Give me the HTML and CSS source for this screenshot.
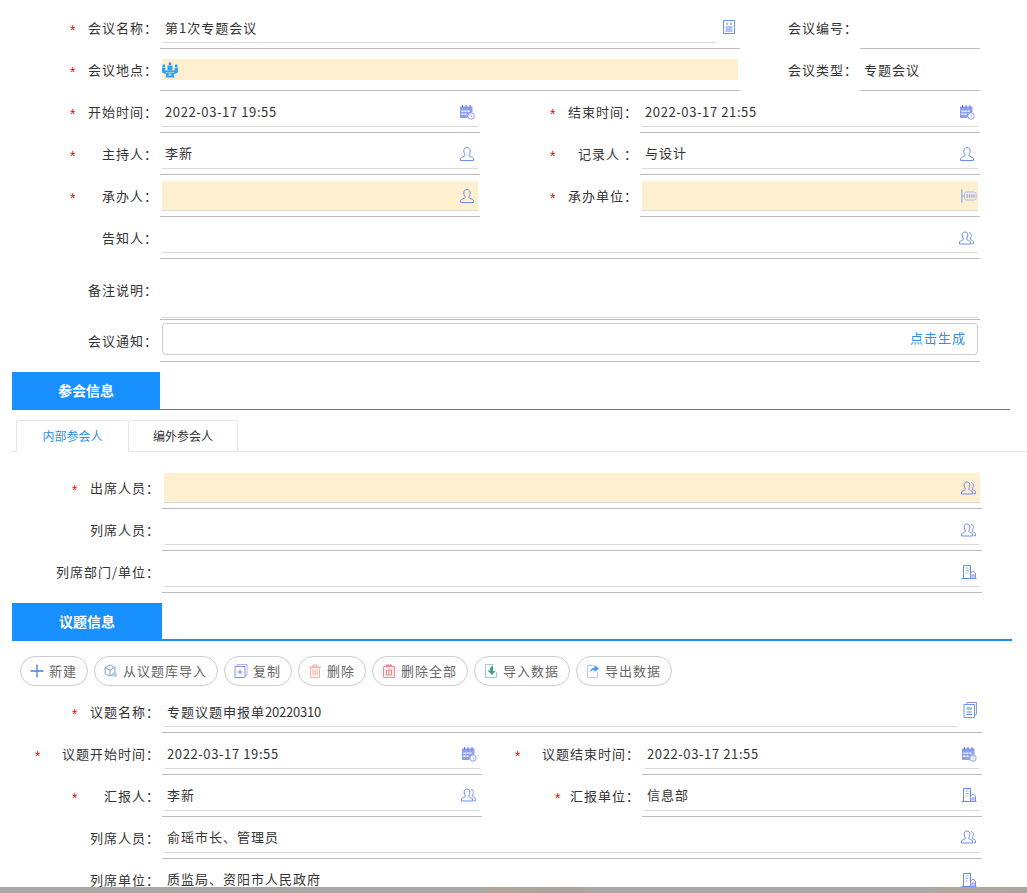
FILE: index.html
```html
<!DOCTYPE html>
<html lang="zh-CN">
<head>
    <meta charset="UTF-8">
    <title>会议信息</title>
    <link rel="stylesheet" href="styles.css">
</head>
<body>
    <svg class="defs" width="0" height="0">
        <symbol id="i-doc" viewBox="0 0 16 16">
            <path d="M2.500 1.500h11v13h-11z" fill="none" stroke="#6b94ee"/>
            <path d="M5 3.500h2V6H5zM9 3.500h2V6H9z" fill="#a9bdf2"/>
            <path d="M4.500 8h7M4.500 10h7M4.500 12h7" stroke="#5f88ea" fill="none"/>
        </symbol>
        <symbol id="i-doc2" viewBox="0 0 16 16">
            <path d="M5 2.500V.5h9.500v12H12.500" fill="none" stroke="#7d9cf0"/>
            <path d="M2 2.500h10.500v13H2z" fill="#fff" stroke="#6b94ee"/>
            <path d="M4.500 5h5.500v3H4.500z" fill="#a9bdf2"/>
            <path d="M4.500 10h5.500M4.500 12.500h5.500" stroke="#5f88ea" fill="none"/>
        </symbol>
        <symbol id="i-cal" viewBox="0 0 16 16">
            <path d="M1 2.500h12.500V8L8 14H1z" fill="#8f9ff0"/>
            <path d="M3.500 1v3M7 1v3M11 1v3" stroke="#5d74e0" fill="none"/>
            <path d="M2.500 6.500h2V8h-2zM5.500 6.500h2V8h-2zM8.500 6.500h2V8h-2zM2.500 9.500h2V11h-2zM5.500 9.500h2V11h-2z" fill="#fff"/>
            <circle cx="12" cy="12" r="3.200" fill="#fff" stroke="#8d9cf0"/>
            <path d="M12 10.500V12l1.200 1" stroke="#8d9cf0" fill="none" stroke-width=".8"/>
        </symbol>
        <symbol id="i-user" viewBox="0 0 16 16">
            <path d="M8 1.500c2 0 3.200 1.500 3.200 3.500S10 8.500 9.800 9.500c0 .8 4.200 1.500 4.700 3v2h-13v-2c.5-1.500 4.700-2.200 4.700-3C6 8.500 4.800 7 4.800 5S6 1.500 8 1.500z" fill="none" stroke="#6a8cf0"/>
        </symbol>
        <symbol id="i-users" viewBox="0 0 16 16">
            <path d="M6 2c1.800 0 2.900 1.300 2.900 3.100S7.800 8.300 7.600 9.300c0 .7 3.500 1.300 4 2.700v2H.5v-2c.5-1.400 4-2 4-2.700C4.200 8.300 3.100 6.900 3.100 5.100S4.200 2 6 2z" fill="none" stroke="#6a8cf0"/>
            <path d="M10 2.500c1.500.2 2.400 1.300 2.400 2.800s-1 2.800-1.200 3.800c0 .6 3 1.300 3.300 2.700v2h-2" fill="none" stroke="#7f90ee"/>
        </symbol>
        <symbol id="i-build" viewBox="0 0 16 16">
            <path d="M2.500 14.500V1.500h7v13M.5 14.500h15" fill="none" stroke="#5f8bef"/>
            <path d="M4.500 4h3M4.500 6.500h3M4.500 9h2" stroke="#97a8f0" stroke-width="1.200" fill="none"/>
            <path d="M9.500 9L12 7l2.500 2v5.500h-5zM11 11h2v3.500h-2z" fill="none" stroke="#7f90ee"/>
        </symbol>
        <symbol id="i-org" viewBox="0 0 18 18">
            <path d="M1 1v16" stroke="#6f96ee" fill="none"/>
            <path d="M1 9h3" stroke="#8f9ff0" fill="none"/>
            <rect x="4" y="4.500" width="13" height="9" rx="2" fill="none" stroke="#a3b0ee"/>
            <path d="M7 7v4M9.500 7v4M12 7v4M14.500 7v4" stroke="#8f9ff0" stroke-width="1.300" fill="none"/>
        </symbol>
        <symbol id="i-meet" viewBox="0 0 16 16">
            <g fill="#2ea3f2">
                <path d="M.5 2.500h2.500V5H.5zM13 2.500h2.500V5H13zM6.700.5h2.600V3H6.700zM5.500 3.500h5v5h-5z"/>
                <path d="M0 5.500h3.300V10L5.500 11.500V13L0 10.500zM16 5.500h-3.300V10L10.500 11.500V13L16 10.500z"/>
                <path d="M3 8.500h10V10H3z"/>
                <path d="M4.500 10.500h7l1 5h-9z"/>
            </g>
            <path d="M6.500 11.500h3v2.500h-3z" fill="#8fd0f8"/>
        </symbol>
        <symbol id="i-plus" viewBox="0 0 14 14">
            <path d="M7 .5v13M.5 7h13" stroke="#3f83e6" stroke-width="1.300" fill="none"/>
        </symbol>
        <symbol id="i-cube" viewBox="0 0 14 14">
            <path d="M6 1L1 3.500v6L6 12l5-2.500v-6zM1 3.500L6 6l5-2.500M6 6v6" fill="none" stroke="#7ea6c8"/>
            <circle cx="10.500" cy="10.500" r="2.500" fill="#b5cfe2"/>
        </symbol>
        <symbol id="i-copy" viewBox="0 0 14 14">
            <path d="M3 2.500V.5h10v11h-2" fill="none" stroke="#b3b6ee"/>
            <path d="M1 2.500h10v11H1z" fill="#fff" stroke="#8190e6"/>
            <path d="M6 5.500v5M3.500 8h5" stroke="#6f8cd8" fill="none"/>
        </symbol>
        <symbol id="i-trash" viewBox="0 0 14 14">
            <path d="M1 3h12M5 3V1h4v2" fill="none" stroke="#f3a49a"/>
            <path d="M2.500 3.500h9v10h-9z" fill="#fff3ee" stroke="#f1b8a8"/>
            <path d="M5 5.500v6M7 5.500v6M9 5.500v6" stroke="#eeb1c0" fill="none"/>
        </symbol>
        <symbol id="i-trash2" viewBox="0 0 14 14">
            <path d="M1.500 2.500h11v11h-11z" fill="#fdeaf0" stroke="#f2869c" stroke-linejoin="round"/>
            <path d="M4 .5h6v2H4z" fill="#f2869c"/>
            <path d="M4.500 6h5v5h-5zM7 6v5" fill="none" stroke="#d9947c"/>
        </symbol>
        <symbol id="i-in" viewBox="0 0 14 14">
            <path d="M1.500 .5h8M1.500 .5v13h11V8" fill="none" stroke="#a5c8d8"/>
            <path d="M9 1L6 4v2.500H3.500L8 11l3.500-4H9z" fill="#3fa58b"/>
        </symbol>
        <symbol id="i-out" viewBox="0 0 14 14">
            <path d="M7 1.500H1.500v12h10V8" fill="none" stroke="#b9c6f2"/>
            <path d="M8.500 1L13 4.500 8.500 8V6C6 6 4.800 7 4 9c0-3 1.500-5 4.500-5.200z" fill="#3f9ff0"/>
        </symbol>
    </svg>

    <div class="page">
        <div class="row">
            <div class="field f-main">
                <div class="lbl"><span class="star">*</span><span>会议名称：</span></div>
                <div class="val val-split">
                    <div class="box">第1次专题会议</div>
                    <svg class="ico ico-out"><use href="#i-doc"/></svg>
                </div>
            </div>
            <div class="field f-side">
                <div class="lbl lbl-side"><span>会议编号：</span></div>
                <div class="val"></div>
            </div>
        </div>
        <div class="row">
            <div class="field f-main">
                <div class="lbl"><span class="star">*</span><span>会议地点：</span></div>
                <div class="val"><div class="box box-place"><svg class="ico"><use href="#i-meet"/></svg></div></div>
            </div>
            <div class="field f-side">
                <div class="lbl lbl-side"><span>会议类型：</span></div>
                <div class="val"><div class="box box-plain">专题会议</div></div>
            </div>
        </div>
        <div class="row">
            <div class="field">
                <div class="lbl"><span class="star">*</span><span>开始时间：</span></div>
                <div class="val"><div class="box"><span class="num">2022-03-17 19:55</span><svg class="ico"><use href="#i-cal"/></svg></div></div>
            </div>
            <div class="field">
                <div class="lbl"><span class="star">*</span><span>结束时间：</span></div>
                <div class="val"><div class="box"><span class="num">2022-03-17 21:55</span><svg class="ico"><use href="#i-cal"/></svg></div></div>
            </div>
        </div>
        <div class="row">
            <div class="field">
                <div class="lbl"><span class="star">*</span><span>主持人：</span></div>
                <div class="val"><div class="box box-up">李新<svg class="ico"><use href="#i-user"/></svg></div></div>
            </div>
            <div class="field">
                <div class="lbl"><span class="star">*</span><span>记录人 ：</span></div>
                <div class="val"><div class="box box-up">与设计<svg class="ico"><use href="#i-user"/></svg></div></div>
            </div>
        </div>
        <div class="row">
            <div class="field">
                <div class="lbl"><span class="star">*</span><span>承办人：</span></div>
                <div class="val"><div class="box req"><span></span><svg class="ico"><use href="#i-user"/></svg></div></div>
            </div>
            <div class="field">
                <div class="lbl"><span class="star">*</span><span>承办单位：</span></div>
                <div class="val"><div class="box req"><span></span><svg class="ico ico-org"><use href="#i-org"/></svg></div></div>
            </div>
        </div>
        <div class="row">
            <div class="field f-full">
                <div class="lbl"><span></span><span>告知人：</span></div>
                <div class="val"><div class="box"><span></span><svg class="ico"><use href="#i-users"/></svg></div></div>
            </div>
        </div>
        <div class="row row-note">
            <div class="field f-full">
                <div class="lbl"><span></span><span>备注说明：</span></div>
                <div class="val"><div class="box box-note"></div></div>
            </div>
        </div>
        <div class="row">
            <div class="field f-full">
                <div class="lbl"><span></span><span>会议通知：</span></div>
                <div class="val"><div class="box box-notice"><span></span><a class="gen">点击生成</a></div></div>
            </div>
        </div>

        <div class="sec-head"><div class="sec-title">参会信息</div></div>
        <div class="tabs">
            <div class="tab tab-on">内部参会人</div>
            <div class="tab">编外参会人</div>
        </div>

        <div class="group">
            <div class="row">
                <div class="field f-full">
                    <div class="lbl"><span class="star">*</span><span>出席人员：</span></div>
                    <div class="val"><div class="box req"><span></span><svg class="ico"><use href="#i-users"/></svg></div></div>
                </div>
            </div>
            <div class="row">
                <div class="field f-full">
                    <div class="lbl"><span></span><span>列席人员：</span></div>
                    <div class="val"><div class="box"><span></span><svg class="ico"><use href="#i-users"/></svg></div></div>
                </div>
            </div>
            <div class="row">
                <div class="field f-full">
                    <div class="lbl lbl-long"><span></span><span>列席部门/单位：</span></div>
                    <div class="val"><div class="box"><span></span><svg class="ico"><use href="#i-build"/></svg></div></div>
                </div>
            </div>
        </div>

        <div class="sec-head sec-head2"><div class="sec-title">议题信息</div></div>
        <div class="toolbar">
            <button class="btn"><svg class="btn-ico"><use href="#i-plus"/></svg>新建</button>
            <button class="btn"><svg class="btn-ico"><use href="#i-cube"/></svg>从议题库导入</button>
            <button class="btn"><svg class="btn-ico"><use href="#i-copy"/></svg>复制</button>
            <button class="btn"><svg class="btn-ico"><use href="#i-trash"/></svg>删除</button>
            <button class="btn"><svg class="btn-ico"><use href="#i-trash2"/></svg>删除全部</button>
            <button class="btn"><svg class="btn-ico"><use href="#i-in"/></svg>导入数据</button>
            <button class="btn"><svg class="btn-ico"><use href="#i-out"/></svg>导出数据</button>
        </div>

        <div class="group">
            <div class="row">
                <div class="field f-full">
                    <div class="lbl"><span class="star">*</span><span>议题名称：</span></div>
                    <div class="val val-split val-split2">
                        <div class="box"><span>专题议题申报单<span class="code">20220310</span></span></div>
                        <svg class="ico ico-out"><use href="#i-doc2"/></svg>
                    </div>
                </div>
            </div>
            <div class="row">
                <div class="field">
                    <div class="lbl lbl-wide"><span class="star">*</span><span>议题开始时间：</span></div>
                    <div class="val"><div class="box"><span class="num">2022-03-17 19:55</span><svg class="ico"><use href="#i-cal"/></svg></div></div>
                </div>
                <div class="field">
                    <div class="lbl lbl-wide"><span class="star">*</span><span>议题结束时间：</span></div>
                    <div class="val"><div class="box"><span class="num">2022-03-17 21:55</span><svg class="ico"><use href="#i-cal"/></svg></div></div>
                </div>
            </div>
            <div class="row">
                <div class="field">
                    <div class="lbl"><span class="star">*</span><span>汇报人：</span></div>
                    <div class="val"><div class="box box-up1">李新<svg class="ico"><use href="#i-users"/></svg></div></div>
                </div>
                <div class="field">
                    <div class="lbl lbl-near"><span class="star">*</span><span>汇报单位：</span></div>
                    <div class="val"><div class="box box-up1">信息部<svg class="ico"><use href="#i-build"/></svg></div></div>
                </div>
            </div>
            <div class="row">
                <div class="field f-full">
                    <div class="lbl"><span></span><span>列席人员：</span></div>
                    <div class="val"><div class="box box-up1">俞瑶市长、管理员<svg class="ico"><use href="#i-users"/></svg></div></div>
                </div>
            </div>
            <div class="row">
                <div class="field f-full">
                    <div class="lbl"><span></span><span>列席单位：</span></div>
                    <div class="val"><div class="box box-up">质监局、资阳市人民政府<svg class="ico"><use href="#i-build"/></svg></div></div>
                </div>
            </div>
        </div>
    </div>
</body>
</html>
```

FILE: styles.css
```css
html, body { margin: 0; height: 100%; overflow: hidden; }
body {
    font-family: "Noto Sans CJK SC", sans-serif;
    font-size: 13px;
    letter-spacing: 1px;
    color: #333;
    background: linear-gradient(90deg, #aaa9a6 0, #aaa9a6 480px, #b3a79b 490px, #ada39a 570px, #aaa9a6 600px, #aaa9a6 930px, #b3a79b 950px, #aaa69f 1027px);
}
.defs { position: absolute; }
.page { height: 880px; padding-top: 7px; background: #fff; overflow: hidden; }

.row { display: flex; width: 980px; height: 42px; }
.row-note { height: 61px; }
.field { display: flex; flex: 1; }
.field:first-child { flex: none; width: 480px; }
.field.f-main { width: 740px; }
.field.f-side { width: 240px; }
.field.f-full { width: 100%; }

.lbl { display: flex; flex: none; justify-content: space-between; box-sizing: border-box; width: 160px; height: 42px; padding: 0 2px 0 70px; line-height: 42px; white-space: pre; }
.lbl-side { width: 120px; padding-left: 0; justify-content: flex-end; }
.lbl-wide { padding-left: 33px; }
.lbl-near { padding-left: 73px; }
.lbl-long { padding-left: 0; }
.star { color: #f00; font-family: "Liberation Sans", sans-serif; font-size: 14px; line-height: 46px; }

.val { flex: 1; box-sizing: border-box; padding: 6px 2px 0; border-bottom: 1px solid #bbb; }
.box { display: flex; justify-content: space-between; align-items: center; box-sizing: border-box; height: 30px; padding: 0 3px; border-bottom: 1px solid #d9d9d9; }
.box-up { padding-bottom: 3px; }
.box-up .ico { margin-bottom: -3px; }
.box-up1 { padding-bottom: 2px; }
.box-up1 .ico { margin-bottom: -1px; }
.req { background: #fdefd0; }
.num { letter-spacing: .6px; }
.code { letter-spacing: -.2px; }

.val-split { display: flex; align-items: flex-start; }
.val-split .box { flex: 1; }
.ico-out { margin: 6px 1px 0 6px; }
.val-split2 .ico-out { margin: 5px 2px 0 5px; }

.box-place { height: 21px; margin-top: 4px; padding: 0; background: #fdefd0; border: 0; justify-content: flex-start; }
.box-plain { padding: 0 0 2px 2px; border: 0; }
.box-note { height: 59px; }
.row-note .val { padding-top: 0; }
.row-note .lbl { line-height: 62px; height: 61px; }
.box-notice { height: 32px; margin-top: -3px; padding: 0 11px 3px 3px; border: 1px solid #ccc; border-radius: 4px; }
.gen { color: #2f8fe8; }

.ico { flex: none; width: 16px; height: 16px; }
.ico-org { margin-right: -2px; }

.sec-head { height: 37px; margin: 10px 17px 0 12px; border-bottom: 1px solid #3583d6; }
.sec-title { width: 148px; height: 38px; background: #1890ff; color: #fff; font-size: 14px; font-weight: 700; line-height: 36px; text-align: center; letter-spacing: 0; }
.sec-head2 { height: 36px; margin-right: 15px; border-bottom: 2px solid #1890ff; }
.sec-head2 .sec-title { width: 150px; }

.tabs { display: flex; height: 31px; margin: 10px 0 15px 12px; padding-left: 4px; border-bottom: 1px solid #e4e4e4; }
.tab { box-sizing: border-box; width: 110px; height: 32px; border: 1px solid #e4e4e4; border-radius: 3px 3px 0 0; font-size: 12px; letter-spacing: 0; line-height: 30px; text-align: center; }
.tab-on { width: 112px; border-right: 0; border-bottom-color: #fff; color: #2f8fe8; }

.group { margin-left: 2px; }

.toolbar { display: flex; gap: 6px; height: 35px; padding: 15px 0 0 20px; }
.btn { display: flex; align-items: center; height: 30px; padding: 0 10px 2px 9px; background: #fff; border: 1px solid #ccc; border-radius: 15px; color: #666; font: inherit; letter-spacing: 1px; }
.btn-ico { flex: none; width: 14px; height: 14px; margin: 2px 5px 0 0; }
```
